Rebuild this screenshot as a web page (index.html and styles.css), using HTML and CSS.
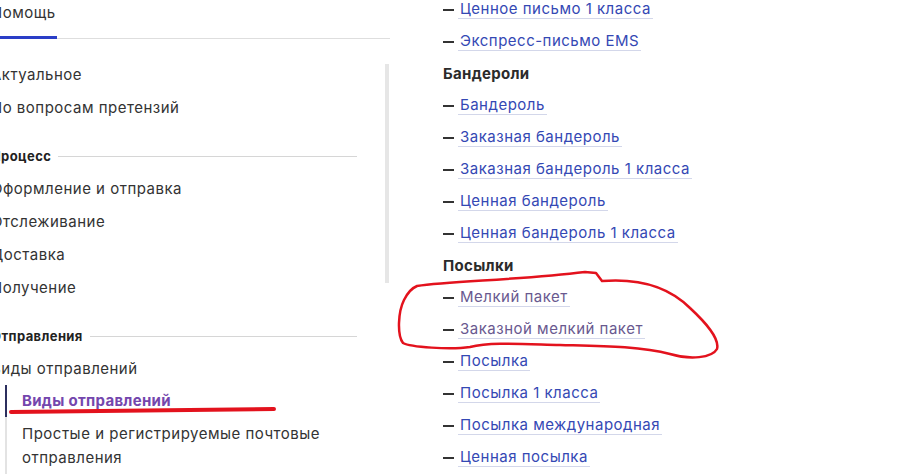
FILE: index.html
```html
<!DOCTYPE html>
<html lang="ru">
<head>
<meta charset="utf-8">
<title>Виды отправлений</title>
<link rel="stylesheet" href="styles.css">
</head>
<body>
<div class="page">
  <aside class="sidebar">
    <div class="tabs">
      <div class="tab tab-active">Помощь</div>
    </div>
    <div class="side-body">
      <nav class="nav">
        <a class="nav-item">Актуальное</a>
        <a class="nav-item">По вопросам претензий</a>
        <div class="nav-heading">Процесс</div>
        <a class="nav-item">Оформление и отправка</a>
        <a class="nav-item">Отслеживание</a>
        <a class="nav-item">Доставка</a>
        <a class="nav-item">Получение</a>
        <div class="nav-heading">Отправления</div>
        <a class="nav-item">Виды отправлений</a>
        <div class="subnav">
          <a class="sub-item sub-active">Виды отправлений</a>
          <a class="sub-item">Простые и регистрируемые почтовые отправления</a>
        </div>
      </nav>
      <div class="scroll-track"><div class="scroll-thumb"></div></div>
    </div>
  </aside>
  <main class="content">
    <div class="row"><span class="dash"></span><a class="link">Ценное письмо 1 класса</a></div>
    <div class="row"><span class="dash"></span><a class="link">Экспресс-письмо EMS</a></div>
    <div class="row group">Бандероли</div>
    <div class="row"><span class="dash"></span><a class="link">Бандероль</a></div>
    <div class="row"><span class="dash"></span><a class="link">Заказная бандероль</a></div>
    <div class="row"><span class="dash"></span><a class="link">Заказная бандероль 1 класса</a></div>
    <div class="row"><span class="dash"></span><a class="link">Ценная бандероль</a></div>
    <div class="row"><span class="dash"></span><a class="link">Ценная бандероль 1 класса</a></div>
    <div class="row group">Посылки</div>
    <div class="row"><span class="dash"></span><a class="link visited">Мелкий пакет</a></div>
    <div class="row"><span class="dash"></span><a class="link visited">Заказной мелкий пакет</a></div>
    <div class="row"><span class="dash"></span><a class="link">Посылка</a></div>
    <div class="row"><span class="dash"></span><a class="link">Посылка 1 класса</a></div>
    <div class="row"><span class="dash"></span><a class="link">Посылка международная</a></div>
    <div class="row"><span class="dash"></span><a class="link">Ценная посылка</a></div>
  </main>
  <svg class="marks" width="918" height="474" viewBox="0 0 918 474" aria-hidden="true">
    <path d="M 11 412 L 274 409" fill="none" stroke="#e3121d" stroke-width="4" stroke-linecap="round"/>
    <path d="M 417 286 C 450 281, 520 280, 585 272 L 596 273 L 602 281 C 640 278, 670 288, 690 308 C 705 322, 720 338, 717 349 C 712 358, 690 360, 670 354 C 640 346, 600 346, 560 345 C 520 344, 490 342, 470 347 C 450 350, 410 347, 403 343 C 397 335, 398 312, 404 300 C 408 292, 412 288, 417 286 Z" fill="none" stroke="#e3121d" stroke-width="2.5" stroke-linejoin="round"/>
  </svg>
</div>
</body>
</html>
```

FILE: styles.css
```css
html, body {
  margin: 0;
  padding: 0;
  background: #ffffff;
  overflow: hidden;
}

body {
  font-family: Inter, "Noto Sans", sans-serif;
  font-size: 15px;
  letter-spacing: 0.5px;
  color: #333333;
}

.page {
  position: relative;
  width: 918px;
  height: 474px;
  display: flex;
  align-items: flex-start;
}

.sidebar {
  margin-left: -9px;
  width: 399px;
  flex: none;
}

.tabs {
  height: 38px;
  border-bottom: 1px solid #dedede;
  display: flex;
}

.tab {
  line-height: 26px;
  height: 39px;
  box-sizing: border-box;
  padding-right: 1px;
  color: #333333;
}

.tab-active {
  border-bottom: 3px solid #2a3ec7;
}

.side-body {
  display: flex;
}

.nav {
  width: 366px;
  padding-top: 19px;
  padding-right: 28px;
  display: flex;
  flex-direction: column;
}

.nav-item {
  line-height: 33px;
  color: #333333;
}

.nav-heading {
  margin-top: 22px;
  margin-bottom: 6px;
  line-height: 20px;
  font-size: 13px;
  letter-spacing: 0.4px;
  font-weight: 700;
  color: #222222;
  display: flex;
  align-items: center;
}

.nav-heading::after {
  content: "";
  flex: 1;
  height: 1px;
  background: #d6d6d6;
  margin-left: 7px;
}

.subnav {
  margin-left: 14px;
  display: flex;
  flex-direction: column;
}

.sub-item {
  border-left: 2px solid #e3e3e3;
  padding: 5px 0 4px 15px;
  line-height: 24px;
  color: #333333;
}

.sub-active {
  border-left-color: #2c2f5e;
  padding: 4px 0 4px 15px;
  font-weight: 700;
  letter-spacing: 0.3px;
  color: #7446ad;
}

.scroll-track {
  width: 4px;
}

.scroll-thumb {
  margin-top: 25px;
  height: 219px;
  background: #e6e6e6;
}

.content {
  margin-left: 53px;
  margin-top: -7px;
  display: flex;
  flex-direction: column;
}

.row {
  height: 32px;
  display: flex;
  align-items: center;
  white-space: nowrap;
}

.group {
  font-weight: 700;
  letter-spacing: 0.3px;
  color: #2b2b2b;
}

.dash {
  width: 11px;
  height: 2px;
  margin-top: 1px;
  margin-right: 4px;
  background: #333333;
}

.link {
  display: inline-block;
  line-height: 18px;
  padding: 0 2px;
  border-bottom: 1px solid #d3d7ea;
  color: #3448b4;
}

.visited {
  color: #69598f;
}

.marks {
  position: absolute;
  left: 0;
  top: 0;
  pointer-events: none;
}
```
